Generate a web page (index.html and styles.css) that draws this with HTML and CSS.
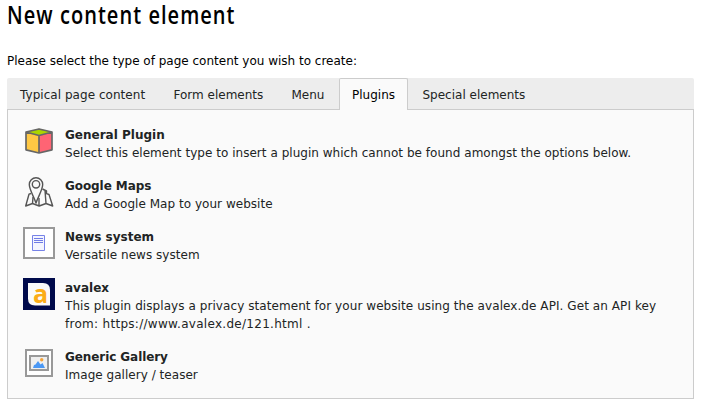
FILE: index.html
```html
<!DOCTYPE html>
<html lang="en">
<head>
<meta charset="utf-8">
<title>New content element</title>
<link rel="stylesheet" href="styles.css">
</head>
<body>
<main class="wizard">
  <h1 class="title"><span class="title-text">New content element</span></h1>
  <p class="intro">Please select the type of page content you wish to create:</p>
  <nav class="tabs">
    <a class="tab tab-typical">Typical page content</a>
    <a class="tab tab-form">Form elements</a>
    <a class="tab tab-menu">Menu</a>
    <a class="tab tab-active">Plugins</a>
    <a class="tab tab-special">Special elements</a>
  </nav>
  <section class="panel">
    <article class="item">
      <svg class="icon" viewBox="0 0 32 32">
        <path fill="#abd500" d="M3 7 16 3.700 29 7 16 10.500z"/>
        <path fill="#ffc844" d="M3 7 16 10.500V28L3 24.700z"/>
        <path fill="#ff6474" d="M29 7 16 10.500V28l13-3.300z"/>
        <path fill="none" stroke="#666" stroke-width="1.700" stroke-linejoin="round" d="M3 7 16 4 29 7v17.800L16 28 3 24.800zM3 7l13 3.500L29 7M16 10.500V28"/>
      </svg>
      <div class="copy"><h2 class="name">General Plugin</h2><p class="desc desc-general">Select this element type to insert a plugin which cannot be found amongst the options below.</p></div>
    </article>
    <article class="item">
      <svg class="icon" viewBox="0 0 32 32" fill="none" stroke="#555" stroke-width="1.400" stroke-linejoin="round">
        <path d="M13 27C11 21 6.300 13.500 6.300 8.500a6.700 6.700 0 0 1 13.400 0c0 5-4.700 12.500-6.700 18.500z"/>
        <circle cx="13" cy="8.300" r="3.700"/>
        <path d="M8 17.500 6 18.200 2.700 30 9.500 27.500l6.700 2.500 6.800-2.500 6.700 2.500L26 18.500l-2.500-.8V15l-4-2M10 21l-.5 6.500M16 22v8M22 14.500l1 13"/>
      </svg>
      <div class="copy"><h2 class="name name-maps">Google Maps</h2><p class="desc">Add a Google Map to your website</p></div>
    </article>
    <article class="item">
      <svg class="icon" viewBox="0 0 32 32">
        <path fill="#fff" stroke="#999" stroke-width="2" d="M1 1h30v30H1z"/>
        <path fill="#f4f5ff" stroke="#7783e8" d="M9.500 8.500h12v15h-12z"/>
        <path stroke="#6f7ce6" d="M11 11.500h9M11 13.500h9M11 15.500h9"/>
      </svg>
      <div class="copy"><h2 class="name">News system</h2><p class="desc">Versatile news system</p></div>
    </article>
    <article class="item">
      <svg class="icon" viewBox="0 0 32 32">
        <path fill="#000a4b" d="M0 0h32v32H0z"/>
        <path fill="#fafafa" d="M5 5h15q7 0 7 7v15.500H12q-7 0-7-7z"/>
        <text class="logo-letter" x="10" y="25">a</text>
      </svg>
      <div class="copy"><h2 class="name">avalex</h2><p class="desc desc-avalex">This plugin displays a privacy statement for your website using the avalex.de API. Get an API key<br><span class="address">from: https://www.avalex.de/121.html .</span></p></div>
    </article>
    <article class="item">
      <svg class="icon" viewBox="0 0 32 32">
        <path fill="#fff" stroke="#999" stroke-width="2" d="M3 3h26v26H3z"/>
        <path fill="#efefef" stroke="#999" stroke-width="2" d="M7 9h18v14H7z"/>
        <path fill="#4a98f5" d="m10 21 1-3 1.500-.5L15 14l2.500 3.500L19.500 16l2.500 5z"/>
        <circle fill="#f5a338" cx="18.700" cy="12.700" r="1.700"/>
      </svg>
      <div class="copy"><h2 class="name name-gallery">Generic Gallery</h2><p class="desc">Image gallery / teaser</p></div>
    </article>
  </section>
</main>
</body>
</html>
```

FILE: styles.css
```css
* { box-sizing: border-box; }
body { margin: 0; background: #fff; color: #212424; font: 12px/18px "DejaVu Sans", Verdana, sans-serif; }
h1, h2, p { margin: 0; }
.wizard { width: 694px; padding-left: 7px; }
.title { height: 52px; margin-top: -4px; margin-bottom: 4px; color: #000; font: 600 26px/36px "Open Sans", sans-serif; white-space: nowrap; }
.title-text { display: inline-block; transform: scaleX(.77); transform-origin: left; letter-spacing: 1.35px; }
.wizard { display: flow-root; }
.intro { height: 26px; color: #000; white-space: nowrap; }
.tabs { display: flex; height: 32px; background: #ededed; border-bottom: 1px solid #ccc; border-radius: 2px 2px 0 0; }
.tab { height: 32px; padding: 8px 0 0 13px; white-space: nowrap; }
.tab-typical { width: 153px; letter-spacing: .04px; }
.tab-form { width: 118px; padding-left: 13.5px; }
.tab-menu { width: 61px; padding-left: 13.5px; }
.tab-active { width: 69px; padding: 7px 0 0 12px; color: #000; background: #fafafa; border: 1px solid #ccc; border-bottom: 0; border-radius: 2px 2px 0 0; }
.tab-special { padding-left: 14.5px; }
.panel { display: flex; flex-direction: column; gap: 15px; height: 289px; padding: 16px 15px 0; background: #fafafa; border: 1px solid #ccc; border-top: 0; box-shadow: 0 2px 0 #ececec; }
.item { display: flex; gap: 10px; }
.icon { display: block; flex: none; width: 32px; height: 32px; margin-top: -1px; }
.copy { white-space: nowrap; }
.name { font-size: 12px; line-height: 18px; font-weight: 700; }
.name-maps, .name-gallery { letter-spacing: -.08px; }
.desc { letter-spacing: .03px; }
.desc-avalex { letter-spacing: .072px; }
.address { letter-spacing: .29px; }
.logo-letter { font: 700 25px/1 "Open Sans", sans-serif; fill: #fbad18; }
```
